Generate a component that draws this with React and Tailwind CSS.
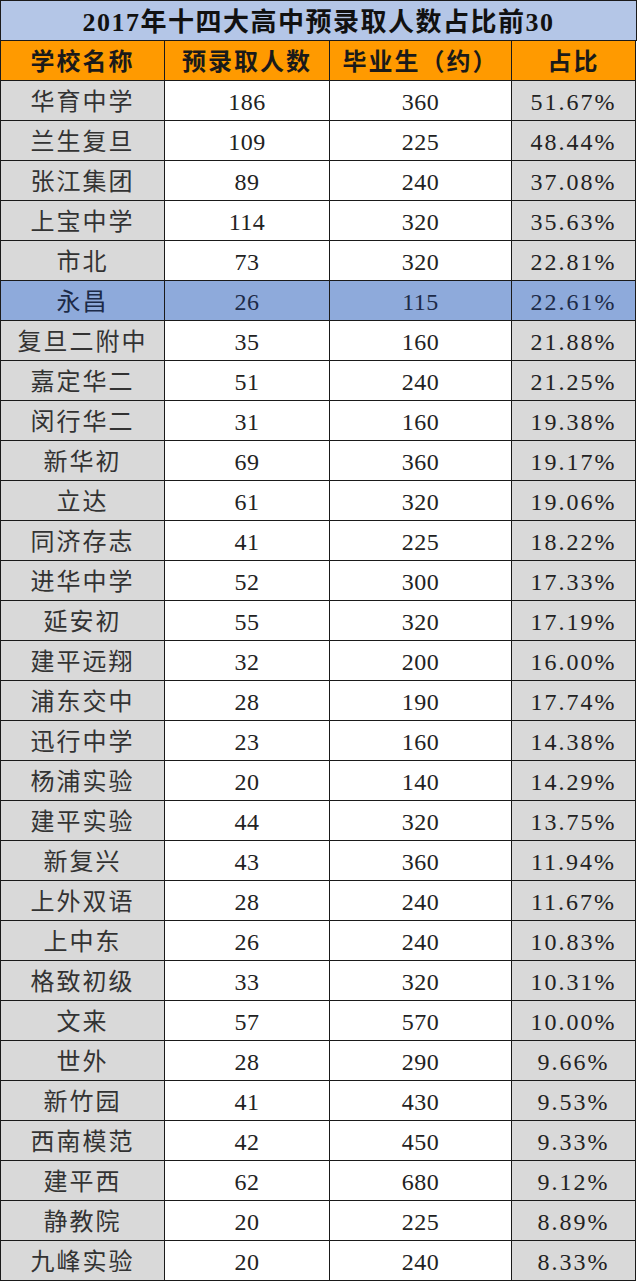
const rows = [
  ['华育中学', '186', '360', '51.67%'],
  ['兰生复旦', '109', '225', '48.44%'],
  ['张江集团', '89', '240', '37.08%'],
  ['上宝中学', '114', '320', '35.63%'],
  ['市北', '73', '320', '22.81%'],
  ['永昌', '26', '115', '22.61%', true],
  ['复旦二附中', '35', '160', '21.88%'],
  ['嘉定华二', '51', '240', '21.25%'],
  ['闵行华二', '31', '160', '19.38%'],
  ['新华初', '69', '360', '19.17%'],
  ['立达', '61', '320', '19.06%'],
  ['同济存志', '41', '225', '18.22%'],
  ['进华中学', '52', '300', '17.33%'],
  ['延安初', '55', '320', '17.19%'],
  ['建平远翔', '32', '200', '16.00%'],
  ['浦东交中', '28', '190', '17.74%'],
  ['迅行中学', '23', '160', '14.38%'],
  ['杨浦实验', '20', '140', '14.29%'],
  ['建平实验', '44', '320', '13.75%'],
  ['新复兴', '43', '360', '11.94%'],
  ['上外双语', '28', '240', '11.67%'],
  ['上中东', '26', '240', '10.83%'],
  ['格致初级', '33', '320', '10.31%'],
  ['文来', '57', '570', '10.00%'],
  ['世外', '28', '290', '9.66%'],
  ['新竹园', '41', '430', '9.53%'],
  ['西南模范', '42', '450', '9.33%'],
  ['建平西', '62', '680', '9.12%'],
  ['静教院', '20', '225', '8.89%'],
  ['九峰实验', '20', '240', '8.33%'],
];

const font = { fontFamily: '"Liberation Serif", "Noto Sans CJK SC", serif' };

const cell = 'h-[40px] pt-[3px] flex items-center justify-center border-r border-b border-[#1a1a1a]';

export default function App() {
  return (
    <div className="w-[640px] h-[1285px] bg-white" style={font}>
      <div className="w-[637px] border-l border-t border-[#1a1a1a]">
        {/* title */}
        <div className={`${cell} bg-[#b4c6e7] text-[26px] font-bold tracking-[1.5px] text-[#111]`}>
          2017年十四大高中预录取人数占比前30
        </div>
        {/* header */}
        <div className="grid grid-cols-[164px_165px_182px_124px] text-[24px] font-bold tracking-[2px] text-[#1a1a1a]">
          <div className={`${cell} bg-[#ff9a00]`}>学校名称</div>
          <div className={`${cell} bg-[#ff9a00]`}>预录取人数</div>
          <div className={`${cell} bg-[#ff9a00]`}>毕业生（约）</div>
          <div className={`${cell} bg-[#ff9a00]`}>占比</div>
        </div>
        {rows.map(([name, n, grad, pct, hl]) => (
          <div
            key={name}
            className={`grid grid-cols-[164px_165px_182px_124px] text-[24px] ${hl ? 'text-[#1c2a48]' : 'text-[#222]'}`}
          >
            <div className={`${cell} tracking-[2px] ${hl ? 'bg-[#8eaadb]' : 'bg-[#d9d9d9] text-[#333]'}`}>{name}</div>
            <div className={`${cell} tracking-[0.5px] ${hl ? 'bg-[#8eaadb]' : 'bg-white'}`}>{n}</div>
            <div className={`${cell} tracking-[0.5px] ${hl ? 'bg-[#8eaadb]' : 'bg-white'}`}>{grad}</div>
            <div className={`${cell} tracking-[2px] ${hl ? 'bg-[#8eaadb]' : 'bg-[#d9d9d9]'}`}>{pct}</div>
          </div>
        ))}
      </div>
    </div>
  );
}
